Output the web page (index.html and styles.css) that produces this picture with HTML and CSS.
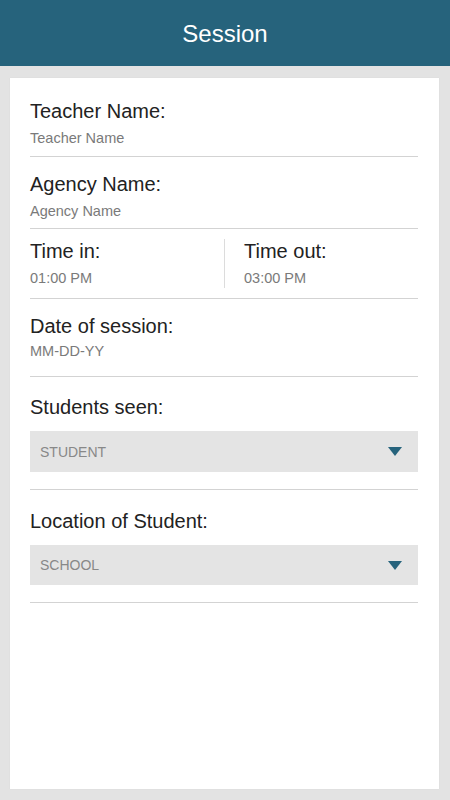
FILE: index.html
```html
<!DOCTYPE html>
<html>
<head>
<meta charset="utf-8">
<link rel="stylesheet" href="styles.css">
</head>
<body>
<header class="appbar">Session</header>
<main class="card">
  <section class="field f-teacher">
    <div class="label">Teacher Name:</div>
    <div class="value">Teacher Name</div>
  </section>
  <section class="field f-agency">
    <div class="label">Agency Name:</div>
    <div class="value">Agency Name</div>
  </section>
  <section class="field f-time">
    <div class="col col-in">
      <div class="label">Time in:</div>
      <div class="value">01:00 PM</div>
    </div>
    <div class="col col-out">
      <div class="label">Time out:</div>
      <div class="value">03:00 PM</div>
    </div>
  </section>
  <section class="field f-date">
    <div class="label">Date of session:</div>
    <div class="value">MM-DD-YY</div>
  </section>
  <section class="field f-select f-students">
    <div class="label">Students seen:</div>
    <div class="select"><span>STUDENT</span><span class="arrow"></span></div>
  </section>
  <section class="field f-select f-location">
    <div class="label">Location of Student:</div>
    <div class="select sel-short"><span>SCHOOL</span><span class="arrow"></span></div>
  </section>
</main>
</body>
</html>
```
FILE: styles.css
```css
* { box-sizing: border-box; }
html, body { margin: 0; padding: 0; }
body {
  background: #e3e3e3;
  font-family: "Liberation Sans", Arial, sans-serif;
  height: 100vh;
  display: flex;
  flex-direction: column;
}
.appbar {
  height: 66px;
  background: #26637c;
  color: #ffffff;
  font-size: 24px;
  line-height: 68px;
  text-align: center;
  flex: none;
}
.card {
  flex: 1;
  margin: 12px 11px 11px 10px;
  background: #ffffff;
  padding: 22px 21px 0 20px;
  box-shadow: 0 0 1px rgba(0,0,0,0.08);
}
.field {
  border-bottom: 1px solid #d3d3d3;
}
.label {
  font-size: 20px;
  line-height: 23px;
  color: #222222;
}
.value {
  font-size: 14.5px;
  line-height: 17px;
  color: #7a7a7a;
  margin-top: 7px;
}
.f-teacher { padding-bottom: 9px; }
.f-agency { padding-top: 16px; padding-bottom: 8px; }
.f-time {
  display: grid;
  grid-template-columns: 195px 1fr;
  padding: 10px 0 10px;
}
.col-in {
  border-right: 1px solid #dcdcdc;
  padding-top: 1px;
  padding-bottom: 1px;
}
.col-out { padding-left: 19px; padding-top: 1px; }
.f-date { padding-top: 16px; padding-bottom: 16px; }
.f-date .value { margin-top: 5px; }
.f-select { padding-top: 19px; padding-bottom: 17px; }
.f-location { padding-top: 20px; }
.select {
  margin-top: 12px;
  height: 41px;
  background: #e4e4e4;
  display: flex;
  align-items: center;
  justify-content: space-between;
  padding: 0 16px 0 10px;
  font-size: 14px;
  color: #888888;
}
.sel-short { height: 40px; }
.arrow {
  width: 0;
  height: 0;
  border-left: 7px solid transparent;
  border-right: 7px solid transparent;
  border-top: 9px solid #26637c;
}
```
